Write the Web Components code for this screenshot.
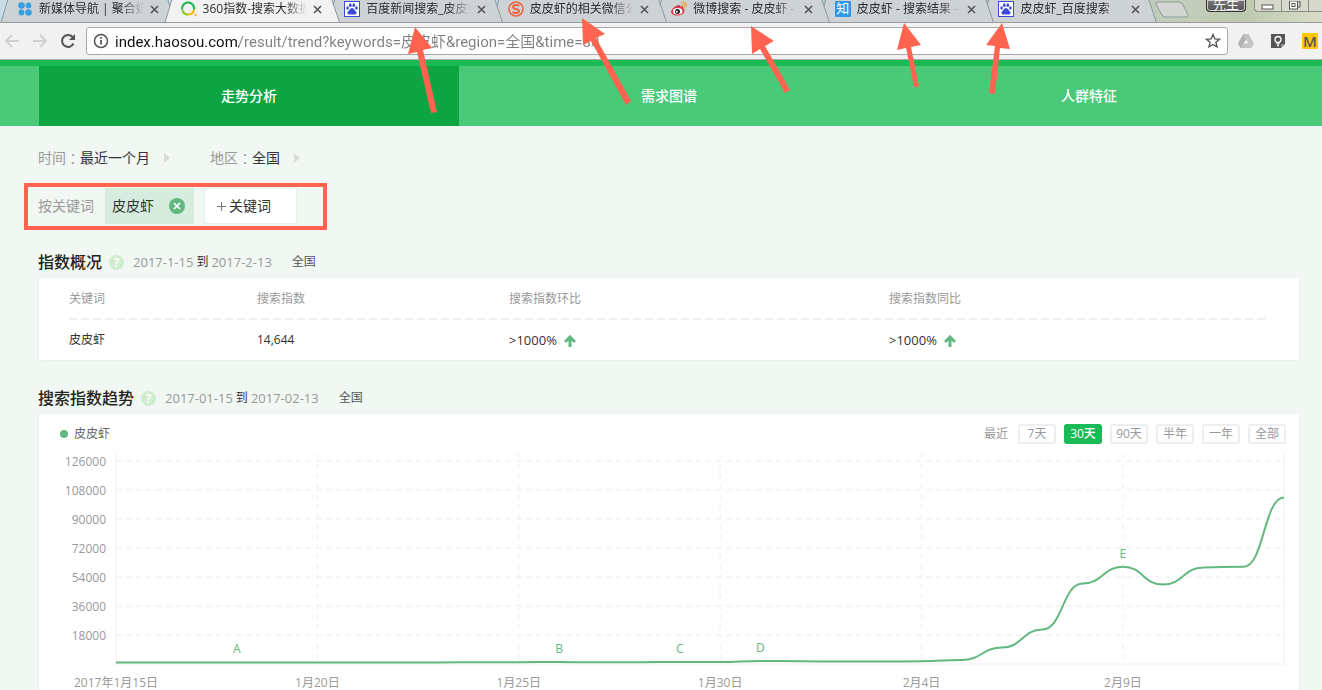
<!DOCTYPE html>
<html lang="zh-CN">
<head>
<meta charset="utf-8">
<meta name="viewport" content="width=device-width, initial-scale=1">
<title>360指数-搜索大数据</title>
<style>
  html, body { margin: 0; min-height: 100%; }
  body {
    --green: #1aba56;
    --line-green: #62b87f;
    --muted: #999;
    --mark: #ff6450;
    background: #f1f8f3;
    color: #333;
    font: 12px/18px "Open Sans", "Noto Sans CJK SC", sans-serif;
    position: relative;
    height: 100vh;
    overflow: hidden;
  }
</style>
</head>
<body>
<tab-strip>
  <browser-tab label="新媒体导航 | 聚合媒体" style="z-index:7">
    <svg slot="icon" viewBox="0 0 16 16" width="16" height="16"><g fill="#3b9fe3"><circle cx="4.500" cy="4.500" r="3.300"/><circle cx="11.500" cy="4.500" r="2.900"/><circle cx="4.500" cy="11.500" r="2.900"/><circle cx="11.500" cy="11.500" r="3.300"/></g></svg>
  </browser-tab>
  <browser-tab active label="360指数-搜索大数据平台" style="z-index:9">
    <svg slot="icon" viewBox="0 0 16 16" width="16" height="16" fill="none" stroke-width="2.200"><path d="M1.200 8.500A6 6 0 1 1 13 8.600" stroke="#21ba53"/><path d="M1.300 9A6 6 0 0 0 7 13.500" stroke="#8bc81f"/><path d="M7 13.500A6 6 0 0 0 13 9" stroke="#f9b917"/><path d="M13.500 14h2" stroke="#f9b917"/></svg>
  </browser-tab>
  <browser-tab label="百度新闻搜索_皮皮虾" style="z-index:6"><paw-icon slot="icon"></paw-icon></browser-tab>
  <browser-tab label="皮皮虾的相关微信公众号" style="z-index:5">
    <svg slot="icon" viewBox="0 0 16 16" width="16" height="16" fill="none" stroke="#f1623e"><circle cx="8" cy="8" r="7" stroke-width="1.600"/><path d="M11.500 4.700C9 3.600 5 3.700 5 6c0 2.500 6 1.500 6 4 0 2.400-4 2.400-6.800 1.200" stroke-width="2"/></svg>
  </browser-tab>
  <browser-tab label="微博搜索 - 皮皮虾 - 微博" style="z-index:4">
    <svg slot="icon" viewBox="0 0 16 16" width="16" height="16"><path d="M6 4.500c2-1 3.500-.6 3.300 1 2.500-.7 3.500.2 2.800 1.800C14 8 14 11 12 12.800c-3 2.800-10.500 2.300-11.800-1C-.5 9.500 3 5.500 6 4.500z" fill="#dd3c48"/><ellipse cx="6.700" cy="10.300" rx="4.700" ry="3.300" fill="#fff"/><circle cx="6.500" cy="10.400" r="2.500" fill="#222"/><circle cx="5.800" cy="10.800" r="1" fill="#fff"/><path d="M10.500 3.700c2-.4 3.200.8 2.800 2.800M10.200 1.200c3.500-.7 6 1.800 5 5.200" fill="none" stroke="#f0a32a" stroke-width="1.300"/></svg>
  </browser-tab>
  <browser-tab label="皮皮虾 - 搜索结果 - 知乎" style="z-index:3"><zhi-icon slot="icon"></zhi-icon></browser-tab>
  <browser-tab label="皮皮虾_百度搜索" style="z-index:2"><paw-icon slot="icon"></paw-icon></browser-tab>
</tab-strip>
<browser-toolbar></browser-toolbar>
<site-nav></site-nav>
<main>
  <filter-bar></filter-bar>
  <keyword-bar></keyword-bar>
  <index-panel heading="指数概况" from="2017-1-15" to="2017-2-13"><overview-table></overview-table></index-panel>
  <index-panel heading="搜索指数趋势" from="2017-01-15" to="2017-02-13"><trend-range></trend-range><trend-chart></trend-chart></index-panel>
</main>
<pointer-arrows></pointer-arrows>

<script>
function define(name, html, setup) {
  const tpl = document.createElement('template');
  tpl.innerHTML = html;
  customElements.define(name, class extends HTMLElement {
    constructor() {
      super();
      this.attachShadow({ mode: 'open' }).append(tpl.content.cloneNode(true));
    }
    connectedCallback() { if (setup) setup(this, this.shadowRoot); }
  });
}
const reset = 'button,input{font:inherit;color:inherit;background:none;border:0;padding:0;margin:0}*{box-sizing:border-box}';

define('paw-icon', `<style>:host{display:block;width:16px;height:16px}svg{display:block}</style>
<svg viewBox="0 0 16 16" width="16" height="16"><rect x=".5" y=".5" width="15" height="15" fill="#fff" stroke="#3c49d8"/><g fill="#3c49d8"><ellipse cx="3.600" cy="7" rx="1.300" ry="1.800"/><ellipse cx="6.300" cy="4.200" rx="1.300" ry="1.900"/><ellipse cx="9.800" cy="4.200" rx="1.300" ry="1.900"/><ellipse cx="12.400" cy="7" rx="1.300" ry="1.800"/><path d="M8 7c2 0 2.500 2.300 4 3.600 1.300 1.400.3 3.200-1.300 3-1.800-.3-3.600-.3-5.400 0-1.600.2-2.600-1.600-1.300-3C5.500 9.300 6 7 8 7z"/></g></svg>`);

define('zhi-icon', `<style>:host{display:block;text-align:center;width:16px;height:16px;background:#2e95e9;color:#fff;font-size:13px;line-height:15px;border-radius:1px}</style>知`);

define('tab-strip', `<style>${reset}
:host{display:flex;height:22px;overflow:hidden;background:linear-gradient(100deg,#c5dcea 0,#bcd9e6 45%,#a5cbbd 75%,#c3cdb9 90%,#bdc9ae 94%,#d9ddc9 100%);position:relative}
.tabs{display:grid;grid-template-columns:repeat(7,1fr);flex:0 1 1145px;min-width:0}
.new{width:36px;height:18px;margin-left:9px;flex:none}
.new svg{display:block}
.user{margin-left:auto;width:40px;height:12px;background:linear-gradient(#777,#555);border:1px solid #333;border-top:0;border-radius:0 0 4px 4px;box-shadow:inset 0 0 0 1px #ccc;color:#fff;font-size:13px}
.user span{display:block;height:11px;line-height:8px}
.ctl{display:flex;margin-left:8px;height:12px;border:1px solid #888d84;border-top:0;border-right:0;border-radius:0 0 0 4px;background:#d5d8ca}
.ctl button{width:27px;height:11px;border-right:1px solid #888d84}
.ctl button:last-child{width:13px;border:0}
.ctl svg{display:block;margin:0 auto}
</style>
<div class="tabs"><slot></slot></div>
<button class="new" aria-label="新标签页"><svg width="36" height="18"><path d="M2 4Q1 2 4 2H25q3 0 4 3l5 10q1 2-2 2H12q-3 0-4-2z" fill="#d3d6d3" stroke="#8d9b96"/></svg></button>
<button class="user"><span>先生</span></button>
<div class="ctl">
<button aria-label="最小化"><svg width="14" height="9"><rect x="1" y="4" width="11" height="4" fill="#fff" stroke="#555"/></svg></button>
<button aria-label="还原"><svg width="14" height="9"><path d="M4 0h8v6h-2" fill="none" stroke="#555"/><rect x="1.500" y="0" width="8" height="8" fill="#fff" stroke="#555"/><rect x="4" y="2.500" width="3" height="3" fill="#fff" stroke="#555"/></svg></button>
<button aria-label="关闭"></button></div>`);

define('browser-tab', `<style>${reset}
:host{display:flex;align-items:center;height:22px;padding:0 4px 4px 17px;position:relative;min-width:0;box-sizing:border-box;--fill:#cdd2d4}
:host([active]){--fill:#f2f2f2}
.shape{position:absolute;left:0;top:0;width:calc(100% + 12px);height:22px;overflow:visible}
.shape path{fill:var(--fill);stroke:#8f989c;vector-effect:non-scaling-stroke}
slot{display:block;position:relative;flex:none}
::slotted(*){display:block}
.title{position:relative;flex:1;margin:0 5px 0 6px;text-align:left;height:18px;overflow:hidden;white-space:nowrap;color:#2d2d2d;-webkit-mask:linear-gradient(90deg,#000 78%,transparent);mask:linear-gradient(90deg,#000 78%,transparent)}
.close{position:relative;width:11px;height:11px;flex:none}
.close svg{display:block}
</style>
<svg class="shape" viewBox="0 0 175 22" preserveAspectRatio="none"><path d="M1 22.500L8 -1H167L175 22.500"/></svg>
<slot name="icon"></slot><button class="title"></button>
<button class="close" aria-label="关闭标签页"><svg width="11" height="11"><path d="M2 2l7 7M9 2l-7 7" stroke="#555" stroke-width="1.600"/></svg></button>`,
  (el, r) => { r.querySelector('.title').textContent = el.getAttribute('label'); });

define('browser-toolbar', `<style>${reset}
:host{display:flex;align-items:center;height:38px;box-sizing:border-box;background:#f1f1f1;border-top:1px solid #9b9b9b;border-bottom:1px solid #aaa;padding-left:4px}
:host>button{width:16px;height:16px;flex:none}
svg{display:block}
.nav{margin-right:12px}
.box{flex:1;display:flex;align-items:center;height:28px;margin:0 10px 0 -2px;padding:0 6px;border:1px solid #a8a8a8;border-radius:3px;background:#fff}
input{flex:1;min-width:0;height:26px;padding-bottom:2px;margin-left:6px;font-family:Roboto,"Noto Sans CJK SC",sans-serif;font-size:15px;color:#777;outline:0;-webkit-text-fill-color:transparent;background:linear-gradient(90deg,#111 124px,#808080 124px);-webkit-background-clip:text;background-clip:text}
.ext{margin-right:16px}
.ext.last{margin-right:4px;background:#ffc50a;color:#555;font-weight:600;font-size:15px;line-height:16px;border-radius:1px}
</style>
<button class="nav" aria-label="后退"><svg width="16" height="16" fill="none" stroke="#cfcfcf" stroke-width="1.800"><path d="M15 8H2M8 2L2 8l6 6"/></svg></button>
<button class="nav" aria-label="前进"><svg width="16" height="16" fill="none" stroke="#cfcfcf" stroke-width="1.800"><path d="M1 8h13M8 2l6 6-6 6"/></svg></button>
<button class="nav" aria-label="刷新"><svg width="16" height="16" fill="none" stroke="#555" stroke-width="2"><path d="M13.500 10.500A6 6 0 1 1 12.600 4"/><path d="M15 1v6H9z" fill="#555" stroke="none"/></svg></button>
<div class="box"><svg width="16" height="16" fill="none" stroke="#555" stroke-width="1.500"><circle cx="8" cy="8" r="6.500"/><path d="M8 7v4.500M8 4v1.700" stroke-width="1.800"/></svg>
<input aria-label="地址栏" value="index.haosou.com/result/trend?keywords=皮皮虾&amp;region=全国&amp;time=30">
<svg width="16" height="16" fill="none" stroke="#555" stroke-width="1.400"><path d="M8 1.600l1.800 4.300 4.700.4-3.600 3 1.100 4.600L8 11.500l-4 2.400 1.100-4.600-3.600-3 4.700-.4z"/></svg></div>
<button class="ext" aria-label="云端硬盘"><svg width="16" height="16"><path d="M5.500 1h5L16 10.500 13.500 15h-11L0 10.500z" fill="#c4c4c4"/><path d="M5.500 1L0 10.500 2.500 15 8 6z" fill="#b2b2b2"/><path d="M8 6.500L10.500 10.500h-5z" fill="#f1f1f1"/></svg></button>
<button class="ext" aria-label="灯泡"><svg width="16" height="16"><path d="M1 1h14v10l-4 4H1z" fill="#555"/><path d="M11 15v-4h4z" fill="#999"/><circle cx="8" cy="6.500" r="3" fill="none" stroke="#fff" stroke-width="1.300"/><path d="M6.500 10.500h3M7 12.500h2" stroke="#fff" stroke-width="1.300"/></svg></button>
<button class="ext last">M</button>`);

define('site-nav', `<style>*{box-sizing:border-box}
:host{display:block;border-top:6px solid var(--green);background:#4aca78;padding:0 23px 0 39px}
nav{display:grid;grid-template-columns:repeat(3,1fr)}
a{height:60px;display:grid;place-items:center;color:#fff;text-decoration:none;font-size:14px;font-weight:500}
a.on{background:#0da543}
</style><nav><a class="on" href="#trend">走势分析</a><a href="#demand">需求图谱</a><a href="#people">人群特征</a></nav>`);

define('filter-bar', `<style>${reset}
:host{display:flex;gap:40px;padding:22px 38px 0;font-size:14px;line-height:20px}
div{display:flex;color:var(--muted)}
.colon{font-family:"Noto Sans CJK TC",sans-serif}
button{color:#333;display:flex;align-items:center}
button::after{content:"";border:5px solid transparent;border-left:6px solid #d8dcd8;border-right:0;margin-left:14px}
</style><div>时间<span class="colon" lang="zh-TW">：</span><button>最近一个月</button></div><div>地区<span class="colon" lang="zh-TW">：</span><button>全国</button></div>`);

define('keyword-bar', `<style>${reset}
:host{display:flex;align-items:center;width:303px;height:47px;box-sizing:border-box;margin:15px 0 22px 24px;border:4px solid var(--mark);padding:0 0 1px 10px;font-size:14px;line-height:20px}
.label{color:var(--muted);margin-right:11px}
.chip{display:flex;align-items:center;justify-content:space-between;width:89px;height:36px;padding:0 9px 0 7px;background:#d5ecdf}
.chip button{width:16px;height:16px;border-radius:50%;background:var(--line-green)}
.chip svg{display:block}
.add{width:93px;height:36px;margin-left:10px;background:#fff;border:1px solid #e6f1e9;text-align:left;padding-left:12px;display:flex;align-items:center;gap:3px}
</style><span class="label">按关键词</span><div class="chip">皮皮虾<button aria-label="删除"><svg width="16" height="16"><path d="M5 5l6 6M11 5l-6 6" stroke="#fff" stroke-width="1.700"/></svg></button></div>
<button class="add"><svg width="9" height="9"><path d="M0 4.500h9M4.500 0v9" stroke="#777"/></svg>关键词</button>`);

define('index-panel', `<style>${reset}
:host{display:block;padding:0 23px 28px 38px}
header{display:flex;align-items:center;height:20px}
h2{margin:0;font-size:16px;line-height:20px;font-weight:500;color:#222}
.help{width:15px;height:15px;border-radius:50%;background:#cfeccf;color:#fff;font-weight:700;line-height:15px;text-align:center;margin:0 9px 0 7px}
time{color:var(--muted);font-size:13px}
.to{margin:0 3px}
.area{margin-left:20px;color:#555}
section{background:#fff;margin:6px 0 0 1px;box-shadow:0 0 3px #0001}
</style><header><h2></h2><button class="help" aria-label="说明">?</button><time class="a"></time><span class="to">到</span><time class="b"></time><span class="area">全国</span></header>
<section><slot></slot></section>`, (el, r) => {
  r.querySelector('h2').textContent = el.getAttribute('heading');
  r.querySelector('.a').textContent = el.getAttribute('from');
  r.querySelector('.b').textContent = el.getAttribute('to');
});

define('overview-table', `<style>*{box-sizing:border-box}
:host{display:block;padding:0 30px}
table{width:100%;table-layout:fixed;border-collapse:collapse;text-align:left}
th,td{padding:0;height:40px;font-weight:400}
th{height:42px;color:var(--muted)}
thead tr{background:repeating-linear-gradient(90deg,#eee 0 8px,transparent 8px 12px) 0 100%/100% 2px no-repeat}
th:first-child{width:188px}th:nth-child(2){width:21%}
.up{font-size:13px}
svg{vertical-align:-2px;margin-left:7px}
</style><table><thead><tr><th>关键词</th><th>搜索指数</th><th>搜索指数环比</th><th>搜索指数同比</th></tr></thead>
<tbody><tr><td>皮皮虾</td><td>14,644</td><td class="up">&gt;1000%</td><td class="up">&gt;1000%</td></tr></tbody></table>`, (el, r) => {
  r.querySelectorAll('.up').forEach(td => td.insertAdjacentHTML('beforeend',
    '<svg width="12" height="12" fill="none" stroke="#62b87f" stroke-width="3"><path d="M6 12V3M1 7l5-5 5 5"/></svg>'));
});

define('trend-range', `<style>${reset}
:host{display:flex;align-items:center;gap:8px;padding:10px 13px 0 21px;height:30px;box-sizing:border-box;color:#666}
.dot{width:8px;height:8px;border-radius:50%;background:var(--line-green);margin-right:-2px}
.recent{margin-left:auto;margin-right:2px;color:var(--muted)}
button{width:38px;height:20px;line-height:16px;border:2px solid #eee;border-radius:3px;color:var(--muted)}
button.on{background:var(--green);border-color:var(--green);color:#fff;font-weight:500}
</style><i class="dot"></i><span>皮皮虾</span><span class="recent">最近</span><button>7天</button><button class="on">30天</button><button>90天</button><button>半年</button><button>一年</button><button>全部</button>`);

/* Daily search index, 15 Jan to 13 Feb 2017 */
const DAYS = [900,900,920,950,930,920,950,980,1000,1050,1150,1200,1100,1150,1200,1250,1900,1700,1500,1500,1700,2500,10200,21400,49900,60400,49300,59900,60400,103300];
const EVENTS = { A: 3, B: 11, C: 14, D: 16, E: 25 };
const TICKS = { 0: '2017年1月15日', 5: '1月20日', 10: '1月25日', 15: '1月30日', 20: '2月4日', 25: '2月9日' };

define('trend-chart', `<style>
:host{display:block;height:256px}
svg{display:block;width:100%;height:256px;overflow:hidden}
text{font-size:12px;fill:#999;text-anchor:middle}
.y{text-anchor:end}
.ev{fill:var(--line-green)}
.grid{stroke:#f5f5f5;stroke-width:2;stroke-dasharray:5 5}
.v{stroke:#eee;stroke-width:1}
.axis{stroke:#f7f7f7;stroke-width:2;fill:none}
.curve{fill:none;stroke:var(--line-green);stroke-width:2}
</style><svg role="img" aria-label="搜索指数趋势"></svg>`, (el, r) => {
  const svg = r.querySelector('svg');
  const draw = () => {
    const left = 77, right = el.clientWidth - 15, top = 10, base = 220;
    const X = i => left + (right - left) * i / (DAYS.length - 1);
    const Y = v => base - v * 29 / 18000;
    let s = '';
    for (let v = 18000; v <= 126000; v += 18000)
      s += `<path class="grid" d="M${left} ${Y(v)}H${right}"/><text class="y" x="${left - 10}" y="${Y(v) + 5}">${v}</text>`;
    for (const i in TICKS) {
      if (+i) s += `<path class="grid v" d="M${X(+i)} ${top}V${base}"/>`;
      s += `<text x="${X(+i)}" y="243">${TICKS[i]}</text>`;
    }
    s += `<path class="axis" d="M${left} ${top}V${base}H${right}V${top}"/>`;
    let d = `M${X(0)} ${Y(DAYS[0])}`;
    for (let i = 1; i < DAYS.length; i++) {
      const m = (X(i - 1) + X(i)) / 2;
      d += `C${m} ${Y(DAYS[i - 1])} ${m} ${Y(DAYS[i])} ${X(i)} ${Y(DAYS[i])}`;
    }
    s += `<path class="curve" d="${d}"/>`;
    for (const k in EVENTS) s += `<text class="ev" x="${X(EVENTS[k])}" y="${Y(DAYS[EVENTS[k]]) - 9}">${k}</text>`;
    svg.innerHTML = s;
  };
  draw();
  new ResizeObserver(draw).observe(el);
});

/* Hand-placed arrows lying over the tabs */
define('pointer-arrows', `<style>:host{position:absolute;inset:0;z-index:20;pointer-events:none}svg{width:100%;height:100%;display:block}</style>
<svg fill="#ff6450"><path d="M415 27L432 48 423 50 437 112 431 113 417 52 408 54z"/><path d="M582 18L605 34 596 38 631 101 626 105 591 41 583 45z"/><path d="M751 26L774 41 765 46 790 90 785 93 760 49 752 54z"/><path d="M904 23L921 45 911 47 919 86 914 87 906 48 897 50z"/><path d="M1002 23L1010 49 1000 48 995 94 989 93 995 46 986 45z"/></svg>`);
</script>
</body>
</html>
